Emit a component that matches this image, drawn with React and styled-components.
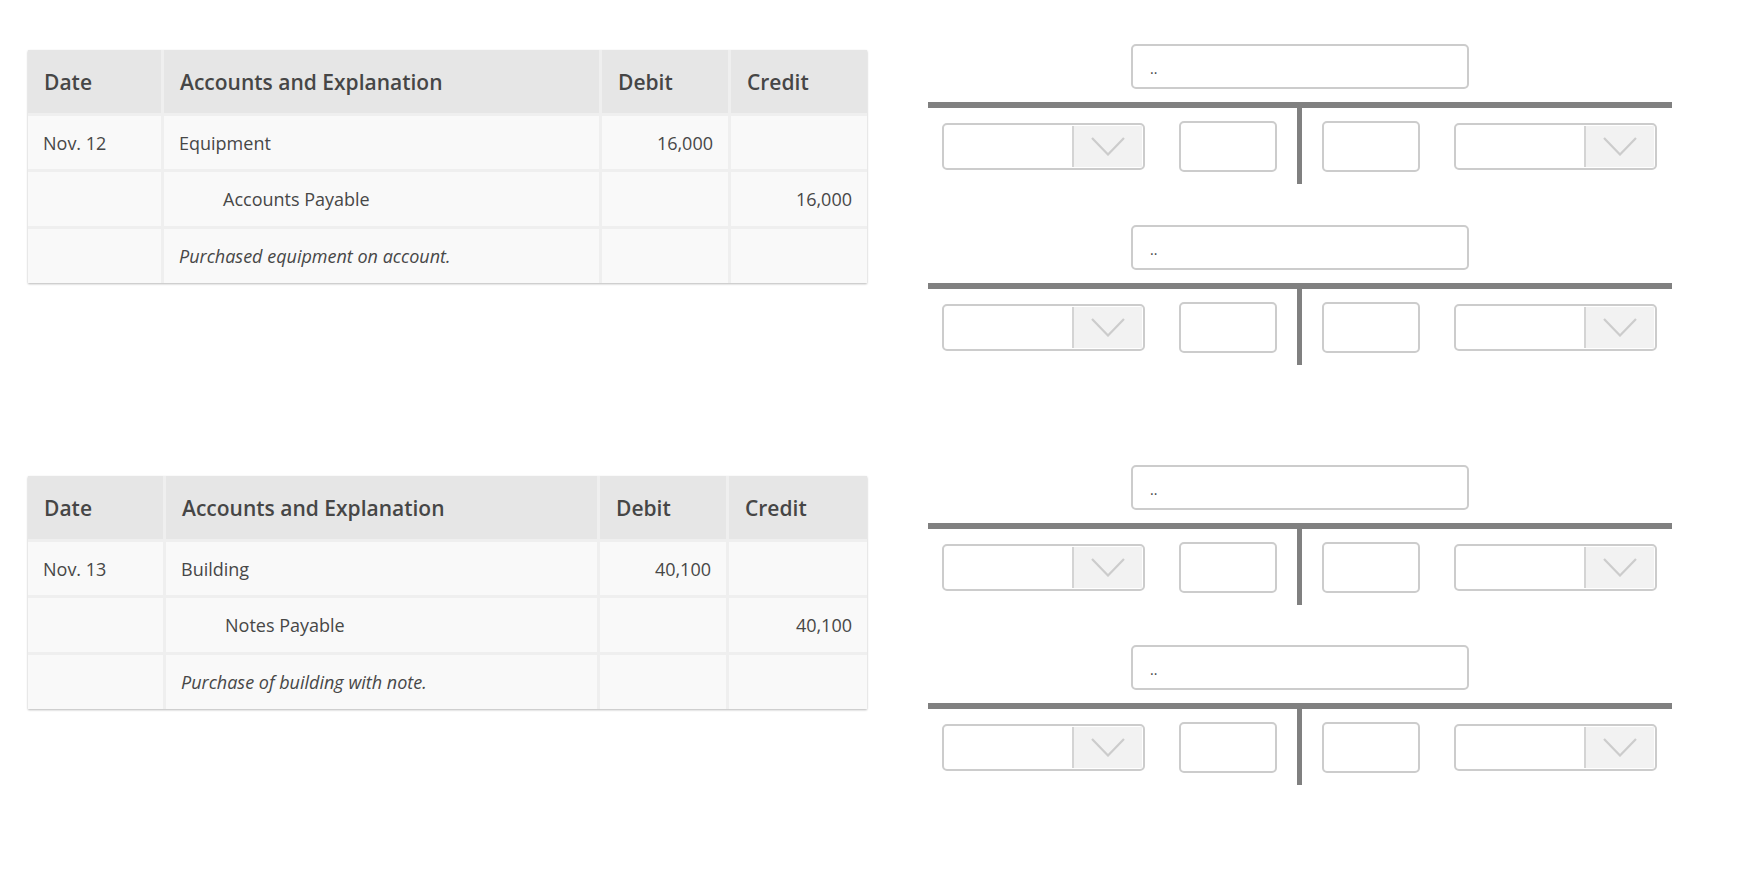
import React from 'react'
import styled, { createGlobalStyle } from 'styled-components'

const GlobalStyle = createGlobalStyle`
  html, body {
    margin: 0;
    padding: 0;
    background: #ffffff;
    font-family: "Open Sans", "Noto Sans", sans-serif;
  }
`

const entries = [
  {
    date: 'Nov. 12',
    cols: '133px 435px 126px 136px',
    offset: 6,
    gap: 41,
    debit: { account: 'Equipment', amount: '16,000' },
    credit: { account: 'Accounts Payable', amount: '16,000' },
    note: 'Purchased equipment on account.',
  },
  {
    date: 'Nov. 13',
    cols: '135px 431px 126px 138px',
    offset: 11,
    gap: 40,
    debit: { account: 'Building', amount: '40,100' },
    credit: { account: 'Notes Payable', amount: '40,100' },
    note: 'Purchase of building with note.',
  },
]

const Chevron = () => (
  <svg width="34" height="19" viewBox="0 0 34 19">
    <polyline points="1,1 17,17.5 33,1" fill="none" stroke="#cccccc" strokeWidth="2.2" />
  </svg>
)

const Select = () => (
  <Dropdown>
    <DropValue />
    <DropArrow>
      <Chevron />
    </DropArrow>
  </Dropdown>
)

const TAccount = () => (
  <TBlock>
    <TitleBox>..</TitleBox>
    <TopLine />
    <TRow>
      <Select />
      <AmountBox />
      <Stem />
      <AmountBox />
      <Select />
    </TRow>
  </TBlock>
)

const Journal = ({ entry }) => (
  <Table $cols={entry.cols} $offset={entry.offset}>
    <Head>Date</Head>
    <Head>Accounts and Explanation</Head>
    <Head>Debit</Head>
    <Head>Credit</Head>

    <Cell>{entry.date}</Cell>
    <Cell>{entry.debit.account}</Cell>
    <Cell $num>{entry.debit.amount}</Cell>
    <Cell />

    <Cell />
    <Cell $indent>{entry.credit.account}</Cell>
    <Cell />
    <Cell $num>{entry.credit.amount}</Cell>

    <Cell />
    <Cell $italic>{entry.note}</Cell>
    <Cell />
    <Cell />
  </Table>
)

const App = () => {
  return (
    <Page>
      <GlobalStyle />
      {entries.map((entry) => (
        <Section key={entry.date}>
          <Journal entry={entry} />
          <TColumn $gap={entry.gap}>
            <TAccount />
            <TAccount />
          </TColumn>
        </Section>
      ))}
    </Page>
  )
}

const Page = styled.main`
  padding: 44px 0 0 28px;
  display: flex;
  flex-direction: column;
  gap: 100px;
`

const Section = styled.section`
  display: flex;
  align-items: flex-start;
  gap: 61px;
`

const Table = styled.div`
  margin-top: ${({ $offset }) => $offset}px;
  display: grid;
  grid-template-columns: ${({ $cols }) => $cols};
  grid-template-rows: 63px 53px 54px 54px;
  gap: 3px;
  background: #efefef;
  box-shadow: 0 1px 2px rgba(0, 0, 0, 0.28);
`

const Head = styled.div`
  background: #e6e6e6;
  display: flex;
  align-items: center;
  padding: 0 16px;
  font-size: 21px;
  font-weight: 600;
  color: #464646;
`

const Cell = styled.div`
  background: #f9f9f9;
  display: flex;
  align-items: center;
  justify-content: ${({ $num }) => ($num ? 'flex-end' : 'flex-start')};
  padding: 0 15px 0 ${({ $indent }) => ($indent ? 59 : 15)}px;
  font-size: 18px;
  font-style: ${({ $italic }) => ($italic ? 'italic' : 'normal')};
  color: #474747;
`

const TColumn = styled.div`
  width: 744px;
  display: flex;
  flex-direction: column;
  gap: ${({ $gap }) => $gap}px;
`

const TBlock = styled.div`
  display: flex;
  flex-direction: column;
  align-items: center;
`

const TitleBox = styled.div`
  box-sizing: border-box;
  width: 338px;
  height: 45px;
  border: 2px solid #cccccc;
  border-radius: 5px;
  padding: 13px 0 0 17px;
  font-size: 14px;
  color: #444444;
  line-height: 20px;
`

const TopLine = styled.div`
  margin-top: 13px;
  align-self: stretch;
  height: 6px;
  background: #808080;
`

const TRow = styled.div`
  align-self: stretch;
  height: 76px;
  display: flex;
  align-items: center;
  padding: 0 15px 0 14px;

  & > :nth-child(2) {
    margin-left: 34px;
    margin-right: 20px;
  }
  & > :nth-child(4) {
    margin-left: 20px;
    margin-right: 34px;
  }
`

const Dropdown = styled.div`
  box-sizing: border-box;
  width: 203px;
  height: 47px;
  border: 2px solid #cccccc;
  border-radius: 5px;
  display: flex;
  overflow: hidden;
  background: #ffffff;
`

const DropValue = styled.div`
  flex: 1;
`

const DropArrow = styled.div`
  width: 68px;
  margin: 1px 1px 1px 0;
  border-left: 2px solid #d4d4d4;
  background: #f2f2f2;
  display: flex;
  align-items: center;
  justify-content: center;
`

const AmountBox = styled.div`
  box-sizing: border-box;
  width: 98px;
  height: 51px;
  border: 2px solid #cccccc;
  border-radius: 5px;
  background: #ffffff;
`

const Stem = styled.div`
  width: 6px;
  align-self: stretch;
  background: #808080;
`

export default App
